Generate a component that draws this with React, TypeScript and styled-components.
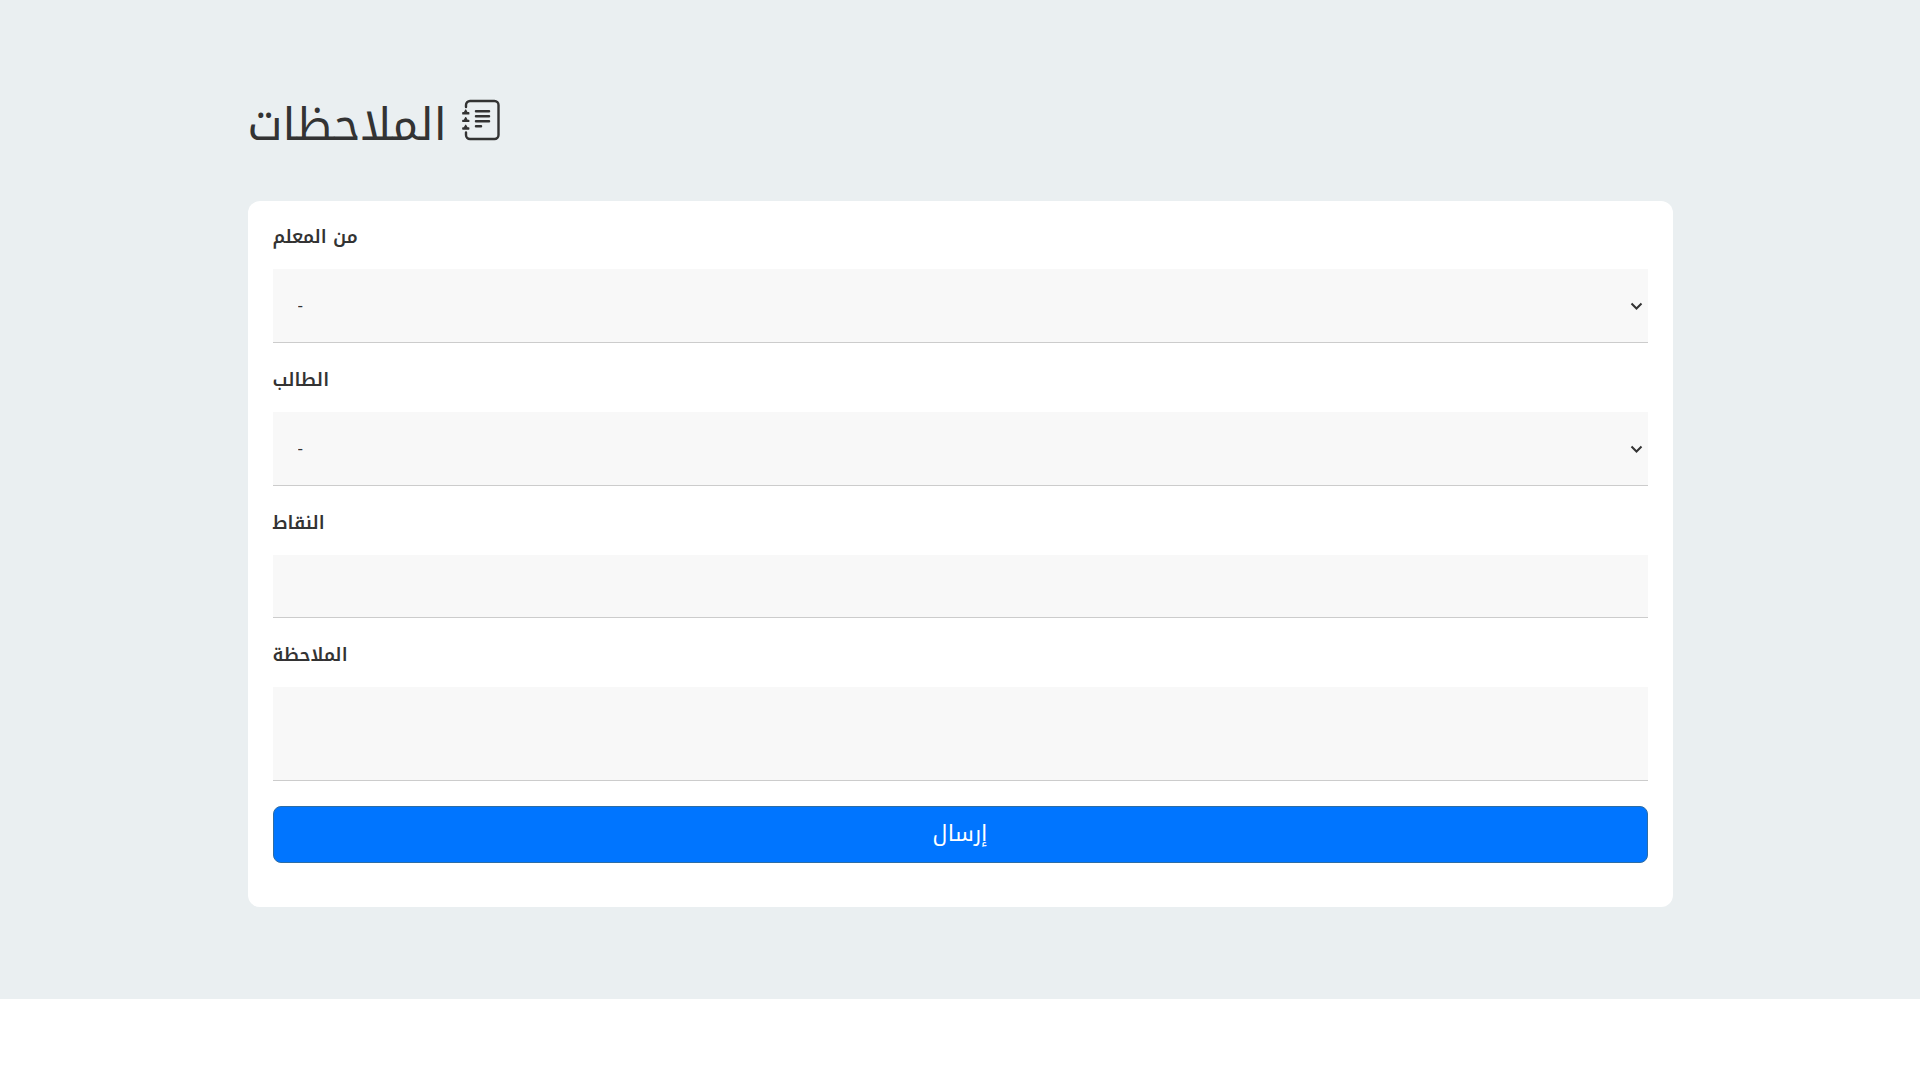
import React from "react";
import type { ReactNode } from "react";
import styled, { createGlobalStyle, css } from "styled-components";

const Global = createGlobalStyle`
  *, *::before, *::after { box-sizing: border-box; }
  body {
    margin: 0;
    background: #fff;
    color: #333;
    font-family: "Noto Kufi Arabic", "Noto Sans", sans-serif;
  }
`;

const Section = styled.main`
  background: #eaeff1;
  padding: 81px 24px 92px;
`;

const Container = styled.div`
  width: 100%;
  max-width: 1425px;
  margin: 0 auto;
`;

const Heading = styled.h1`
  display: flex;
  align-items: flex-start;
  gap: 14px;
  margin: 0 0 31px;
  font-size: 45px;
  line-height: 89px;
  font-weight: 400;
`;

const HeadingIcon = styled.svg`
  width: 40px;
  height: 42px;
  margin-top: 18px;
  flex: none;
  fill: none;
  stroke: currentColor;
  stroke-linecap: round;
  stroke-linejoin: round;
`;

const Card = styled.form`
  display: flex;
  flex-direction: column;
  background: #fff;
  border-radius: 12px;
  padding: 24px 25px 44px;
`;

const FieldGroup = styled.div`
  display: flex;
  flex-direction: column;
  margin-bottom: 25px;
`;

const Label = styled.label`
  padding-bottom: 20px;
  line-height: 24px;
  font-size: 18px;
  font-weight: 600;
`;

const controlStyle = css`
  display: block;
  width: 100%;
  margin: 0;
  border: 0;
  border-bottom: 1px solid #ccc;
  border-radius: 0;
  background: #f8f8f8;
  color: #333;
  font-family: inherit;
  font-size: 17px;
  outline: 0;
`;

const Select = styled.select`
  ${controlStyle}
  appearance: none;
  height: 74px;
  padding: 0 25px 2px;
`;

const SelectBox = styled.div`
  position: relative;
`;

const Chevron = styled.svg`
  position: absolute;
  right: 5px;
  top: 32px;
  width: 13px;
  height: 10px;
  fill: none;
  stroke: #333;
  stroke-width: 2;
  pointer-events: none;
`;

const Input = styled.input`
  ${controlStyle}
  height: 63px;
  padding: 0 25px;
`;

const TextArea = styled.textarea`
  ${controlStyle}
  height: 94px;
  padding: 25px;
  resize: none;
`;

const SubmitButton = styled.button`
  height: 57px;
  padding: 0 16px 2px;
  border: 1px solid #2e6da4;
  border-radius: 8px;
  background: #0075ff;
  color: #fff;
  font-family: inherit;
  font-size: 22px;
  cursor: pointer;
`;

function NotebookIcon() {
  return (
    <HeadingIcon viewBox="0 0 40 42" aria-hidden="true">
      <path
        strokeWidth="2.400"
        d="M5 8V6a4 4 0 0 1 4-4h24.500a4 4 0 0 1 4 4v30a4 4 0 0 1-4 4H9a4 4 0 0 1-4-4v-2.500"
      />
      <path strokeWidth="2.500" d="M15 12.300h13M15 17.200h13M15 22.200h13M15 27.300h5" />
      <path
        strokeWidth="1.200"
        fill="currentColor"
        d="M1.800 13.700h1.400l1.500-2.700 1.500 2.700h1.600v1.200h-6zM1.800 21.300h1.400l1.500-2.700 1.500 2.700h1.600v1.200h-6zM1.800 28.900h1.400l1.500-2.700 1.500 2.700h1.600v1.200h-6z"
      />
    </HeadingIcon>
  );
}

function Field({ id, label, children }: { id: string; label: string; children: ReactNode }) {
  return (
    <FieldGroup>
      <Label htmlFor={id}>{label}</Label>
      {children}
    </FieldGroup>
  );
}

function Dropdown({ id }: { id: string }) {
  return (
    <SelectBox>
      <Select id={id} name={id}>
        <option>-</option>
      </Select>
      <Chevron viewBox="0 0 13 10" aria-hidden="true">
        <path d="M1.500 2.500l5 5 5-5" />
      </Chevron>
    </SelectBox>
  );
}

export default function App() {
  return (
    <>
      <Global />
      <Section>
        <Container>
          <Heading>
            <span>الملاحظات</span>
            <NotebookIcon />
          </Heading>
          <Card>
            <Field id="teacher" label="من المعلم">
              <Dropdown id="teacher" />
            </Field>
            <Field id="student" label="الطالب">
              <Dropdown id="student" />
            </Field>
            <Field id="points" label="النقاط">
              <Input id="points" name="points" type="text" />
            </Field>
            <Field id="note" label="الملاحظة">
              <TextArea id="note" name="note" />
            </Field>
            <SubmitButton type="button">إرسال</SubmitButton>
          </Card>
        </Container>
      </Section>
    </>
  );
}
